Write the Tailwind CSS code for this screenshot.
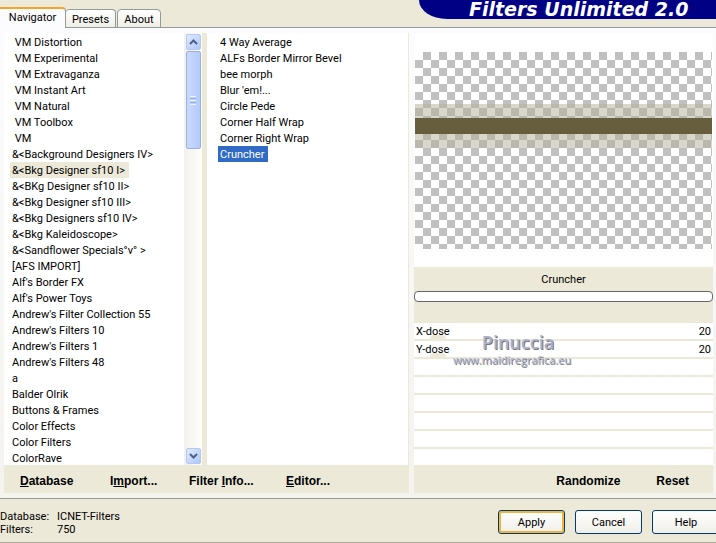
<!DOCTYPE html>
<html lang="en">
<head>
  <meta charset="UTF-8">
  <title>Filters Unlimited 2.0</title>
  <meta name="viewport" content="width=device-width, initial-scale=1.0">
  <script src="https://cdn.jsdelivr.net/npm/@tailwindcss/browser@4"></script>
</head>
<body class="flex h-screen flex-col overflow-hidden bg-[#ece9d8] font-[Roboto,Arial,sans-serif] text-[11px] leading-4 text-black">

  <!-- Tabs and title -->
  <header class="flex h-7 shrink-0 items-start justify-between border-b border-[#919b9c]">
    <nav class="flex h-7 items-end">
      <button class="h-[21px] w-[66px] rounded-tr-sm border-t-2 border-r border-t-[#f5a623] border-r-[#919b9c] bg-[#fcfcfe] pb-0.5">Navigator</button>
      <button class="mr-px h-[19px] w-[50px] rounded-t-sm border border-l-0 border-[#919b9c] bg-linear-to-b from-white to-[#f0efe6] pt-0.5">Presets</button>
      <button class="h-[19px] w-11 rounded-t-sm border border-[#919b9c] bg-linear-to-b from-white to-[#f0efe6] pt-0.5">About</button>
    </nav>
    <h1 class="h-[19px] w-[297px] rounded-bl-[28px_19px] bg-[#000084] pl-[50px] font-['DejaVu_Sans',sans-serif] text-[19px] leading-[19px] font-bold whitespace-nowrap text-white italic">Filters Unlimited 2.0</h1>
  </header>

  <main class="flex min-h-0 flex-1 bg-linear-to-b from-[#fcfcfe] to-[#f4f3ee] pt-[5px] pr-[3px] pb-[5px] pl-1">

    <!-- Categories and filters -->
    <section class="mr-[5px] flex w-[405px] shrink-0 flex-col">
      <div class="flex min-h-0 flex-1">
        <ul id="categories" class="min-w-0 flex-1 overflow-hidden bg-white pt-px pl-1.5"></ul>
        <div class="flex w-[18px] flex-col items-center bg-linear-to-r from-[#f3f1ec] to-[#fefefb] py-px">
          <button aria-label="Scroll up" class="flex h-4 w-[15px] shrink-0 items-center justify-center rounded-xs border border-[#b4c8f6] bg-linear-to-br from-[#e1eafe] to-[#aec8f7]">
            <svg width="9" height="6" viewBox="0 0 9 6" fill="none" stroke="#4d6185" stroke-width="2"><path d="M1 5 4.500 1.500 8 5"/></svg>
          </button>
          <div class="mt-px flex h-[98px] w-[15px] flex-col items-center justify-center gap-px rounded-xs border border-[#98b0e8] bg-linear-to-r from-[#cad9fd] to-[#b4cafa]">
            <i class="h-px w-1.5 bg-[#eef4fe]"></i>
            <i class="h-px w-1.5 bg-[#8cb0f8]"></i>
            <i class="h-px w-1.5 bg-[#eef4fe]"></i>
            <i class="h-px w-1.5 bg-[#8cb0f8]"></i>
            <i class="h-px w-1.5 bg-[#eef4fe]"></i>
          </div>
          <button aria-label="Scroll down" class="mt-auto flex h-4 w-[15px] shrink-0 items-center justify-center rounded-xs border border-[#b4c8f6] bg-linear-to-br from-[#e1eafe] to-[#aec8f7]">
            <svg width="9" height="6" viewBox="0 0 9 6" fill="none" stroke="#4d6185" stroke-width="2"><path d="M1 1 4.500 4.500 8 1"/></svg>
          </button>
        </div>
        <div class="w-[5px] bg-[#ece9d8]"></div>
        <ul id="filters" class="w-[202px] border-r border-[#ece9d8] bg-white pt-px pl-[11px]"></ul>
      </div>
      <div class="flex h-7 shrink-0 items-center bg-[#ece9d8] pt-1 pl-4 font-['Liberation_Sans',Arial,sans-serif] text-xs font-bold">
        <button class="w-[90px] text-left"><u>D</u>atabase</button>
        <button class="w-[79px] text-left">I<u>m</u>port...</button>
        <button class="w-[97px] text-left">Filter <u>I</u>nfo...</button>
        <button><u>E</u>ditor...</button>
      </div>
    </section>

    <!-- Preview and parameters -->
    <section class="relative flex min-w-0 flex-1 flex-col">
      <div class="bg-white pt-[19px] pr-px pb-[18px] pl-px">
        <div class="h-[197px] bg-[conic-gradient(#c0c0c0_25%,#fff_0_50%,#c0c0c0_0_75%,#fff_0)] bg-size-[16px_16px] pt-[52px]">
          <div class="h-11 border-y-14 border-[#b4ae98]/50 bg-[#675e3d] bg-clip-padding"></div>
        </div>
      </div>
      <div class="h-14 shrink-0 bg-[#ece9d8] pt-[5px]">
        <p class="text-center">Cruncher</p>
        <div role="progressbar" aria-label="Progress" class="mt-[3px] h-[11px] rounded-sm border border-[#686868] bg-white"></div>
      </div>
      <div id="params" class="min-h-0 flex-1 overflow-hidden bg-white"></div>
      <div class="flex h-7 shrink-0 items-center justify-end gap-9 bg-[#ece9d8] pt-1 pr-6 font-['Liberation_Sans',Arial,sans-serif] text-xs font-bold">
        <button>Randomize</button>
        <button>Reset</button>
      </div>
      <!-- Signature over the sliders -->
      <div class="pointer-events-none absolute top-[299px] left-[39px] text-center font-['Open_Sans',sans-serif] text-[#aeb0cc] text-shadow-[1px_1px_0_#777]">
        <p class="pl-3 text-lg leading-5 font-semibold">Pinuccia</p>
        <p class="text-[11px] leading-4">www.maidiregrafica.eu</p>
      </div>
    </section>
  </main>

  <footer class="flex h-[45px] shrink-0 items-start border-t border-b border-t-[#919b9c] border-b-[#aca899] pt-[11px]">
    <dl class="grid grid-cols-[57px_auto] leading-[13px]">
      <dt>Database:</dt><dd>ICNET-Filters</dd>
      <dt>Filters:</dt><dd>750</dd>
    </dl>
    <div class="-mr-1 ml-auto flex gap-2.5">
      <button class="h-6 w-[67px] rounded-[3px] border border-[#003c74] bg-linear-to-b from-white to-[#f0efe8] pt-0.5 inset-ring-2 inset-ring-[#f3b43c]">Apply</button>
      <button class="h-6 w-[67px] rounded-[3px] border border-[#003c74] bg-linear-to-b from-white to-[#f0efe8] pt-0.5">Cancel</button>
      <button class="h-6 w-[68px] rounded-[3px] border border-[#003c74] bg-linear-to-b from-white to-[#f0efe8] pt-0.5">Help</button>
    </div>
  </footer>

  <script>
    const categories = [
      " VM Distortion", " VM Experimental", " VM Extravaganza", " VM Instant Art",
      " VM Natural", " VM Toolbox", " VM", "&<Background Designers IV>",
      "&<Bkg Designer sf10 I>", "&<BKg Designer sf10 II>", "&<Bkg Designer sf10 III>",
      "&<Bkg Designers sf10 IV>", "&<Bkg Kaleidoscope>", "&<Sandflower Specials°v° >",
      "[AFS IMPORT]", "Alf's Border FX", "Alf's Power Toys", "Andrew's Filter Collection 55",
      "Andrew's Filters 10", "Andrew's Filters 1", "Andrew's Filters 48", "a",
      "Balder Olrik", "Buttons & Frames", "Color Effects", "Color Filters", "ColorRave"
    ];
    const filters = [
      "4 Way Average", "ALFs Border Mirror Bevel", "bee morph", "Blur 'em!...",
      "Circle Pede", "Corner Half Wrap", "Corner Right Wrap", "Cruncher"
    ];
    const params = [["X-dose", 20], ["Y-dose", 20], null, null, null, null, null, null];

    function fillList(id, items, selected, selectedClass) {
      const list = document.getElementById(id);
      items.forEach(name => {
        const li = document.createElement("li");
        li.className = "flex h-4";
        const btn = document.createElement("button");
        btn.className = "whitespace-pre pt-0.5 pl-0.5 pr-1 leading-[14px] " + (name === selected ? selectedClass : "");
        btn.textContent = name;
        li.appendChild(btn);
        list.appendChild(li);
      });
    }

    fillList("categories", categories, "&<Bkg Designer sf10 I>", "bg-[#ece9d8]");
    fillList("filters", filters, "Cruncher", "bg-[#316ac5] text-white");

    document.getElementById("params").innerHTML = params.map((p, i) => `
      <div class="relative h-[18px] border-b-2 border-[#ece9d8]">
        ${p ? `
        <input id="param${i}" type="range" min="0" max="350" value="${p[1]}"
          class="absolute bottom-0 left-0 h-1 w-full appearance-none bg-transparent [&::-webkit-slider-thumb]:h-1 [&::-webkit-slider-thumb]:w-4 [&::-webkit-slider-thumb]:appearance-none [&::-webkit-slider-thumb]:rounded-t-full [&::-webkit-slider-thumb]:bg-[#ece9d8]">
        <div class="relative flex justify-between px-0.5 pt-0.5 leading-[14px]">
          <label for="param${i}">${p[0]}</label>
          <output for="param${i}">${p[1]}</output>
        </div>` : ""}
      </div>`).join("");
  </script>

</body>
</html>
